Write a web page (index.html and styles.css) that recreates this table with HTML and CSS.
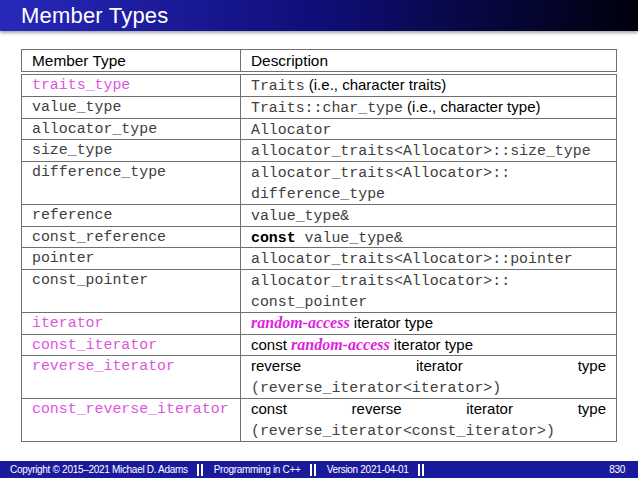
FILE: index.html
```html
<!DOCTYPE html>
<html>
<head>
<meta charset="utf-8">
<link rel="stylesheet" href="styles.css">
</head>
<body>
<div class="slide">
  <header class="titlebar"><h1 class="title">Member Types</h1></header>
  <main class="content">
    <table class="mt">
      <thead>
        <tr><th class="c1">Member Type</th><th class="c2">Description</th></tr>
      </thead>
      <tbody>
        <tr><td class="name hl">traits_type</td><td><code>Traits</code> (i.e., character traits)</td></tr>
        <tr><td class="name">value_type</td><td><code>Traits::char_type</code> (i.e., character type)</td></tr>
        <tr><td class="name">allocator_type</td><td><code>Allocator</code></td></tr>
        <tr><td class="name">size_type</td><td><code>allocator_traits&lt;Allocator&gt;::size_type</code></td></tr>
        <tr><td class="name">difference_type</td><td><code>allocator_traits&lt;Allocator&gt;::<br>difference_type</code></td></tr>
        <tr><td class="name">reference</td><td><code>value_type&amp;</code></td></tr>
        <tr><td class="name">const_reference</td><td><code><b class="kw">const</b> value_type&amp;</code></td></tr>
        <tr><td class="name">pointer</td><td><code>allocator_traits&lt;Allocator&gt;::pointer</code></td></tr>
        <tr><td class="name">const_pointer</td><td><code>allocator_traits&lt;Allocator&gt;::<br>const_pointer</code></td></tr>
        <tr><td class="name hl">iterator</td><td><em class="ra">random-access</em> iterator type</td></tr>
        <tr><td class="name hl">const_iterator</td><td>const <em class="ra">random-access</em> iterator type</td></tr>
        <tr><td class="name hl">reverse_iterator</td><td class="just">reverse iterator type <code>(reverse_iterator&lt;iterator&gt;)</code></td></tr>
        <tr><td class="name hl">const_reverse_iterator</td><td class="just">const reverse iterator type <code>(reverse_iterator&lt;const_iterator&gt;)</code></td></tr>
      </tbody>
    </table>
  </main>
  <footer class="footer">
    <span class="fitem">Copyright © 2015–2021 Michael D. Adams</span>
    <span class="sep"></span>
    <span class="fitem">Programming in C++</span>
    <span class="sep"></span>
    <span class="fitem">Version 2021-04-01</span>
    <span class="sep"></span>
    <span class="spacer"></span>
    <span class="fitem">830</span>
  </footer>
</div>
</body>
</html>
```
FILE: styles.css
```css
* { box-sizing: border-box; }
html, body { margin: 0; padding: 0; background: #fff; }
body { font-family: "Liberation Sans", Arial, sans-serif; }
.slide {
  width: 638px;
  height: 478px;
  display: flex;
  flex-direction: column;
  overflow: hidden;
}
.titlebar {
  height: 31px;
  background: linear-gradient(to right, #2828bc 0%, #0e0e78 50%, #00000c 100%);
  box-shadow: 0 2px 3px rgba(0,0,0,0.35);
  display: flex;
  align-items: flex-end;
  padding-left: 21px;
  flex: none;
}
.title {
  margin: 0;
  color: #fff;
  font-weight: normal;
  font-size: 22px;
  line-height: 27px;
  padding-bottom: 2px;
  letter-spacing: 0.2px;
}
.content {
  flex: 1;
  padding: 18px 0 0 21px;
}
.mt {
  border-collapse: collapse;
  width: 596px;
  table-layout: fixed;
  font-size: 15px;
  color: #000;
}
.mt th, .mt td {
  border: 1px solid #707070;
  padding: 0 10px;
  text-align: left;
  vertical-align: top;
  line-height: 20.8px;
}
.mt th {
  font-weight: normal;
  font-size: 15.4px;
  line-height: 21px;
  border-bottom: 4px double #707070;
}
.mt .c1 { width: 219px; }
code, .name {
  font-family: "Liberation Mono", "Courier New", monospace;
  font-size: 14.9px;
  color: #404040;
}
code { line-height: 1; }
.name.hl { color: #dd55dd; }
.kw { color: #000; font-weight: bold; }
.ra {
  font-family: "Liberation Serif", "Times New Roman", serif;
  font-style: italic;
  font-weight: bold;
  color: #dd22dd;
  font-size: 16px;
  line-height: 1;
}
.just { text-align: justify !important; }
.footer {
  flex: none;
  height: 17px;
  background: #1a1a9c;
  color: #fff;
  font-size: 10px;
  letter-spacing: -0.3px;
  display: flex;
  align-items: center;
  padding: 0 13px 0 10px;
}
.fitem { white-space: nowrap; }
.sep {
  width: 6px;
  height: 12px;
  margin: 0 11px 0 9px;
  border-left: 2px solid #fff;
  border-right: 2px solid #fff;
}
.spacer { flex: 1; }
```
